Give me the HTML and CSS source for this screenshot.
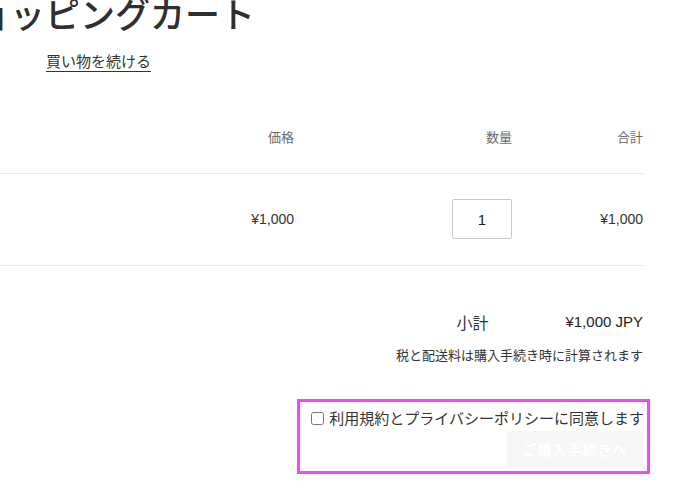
FILE: index.html
```html
<!DOCTYPE html>
<html lang="ja">
<head>
<meta charset="utf-8">
<title>ショッピングカート</title>
<link rel="stylesheet" href="styles.css">
</head>
<body>
<div class="page">
  <header class="cart-header">
    <h1 class="title">ショッピングカート</h1>
    <a class="continue" href="#">買い物を続ける</a>
  </header>

  <div class="cart-table">
    <div class="cart-row cart-head">
      <div class="cell"></div>
      <div class="cell right">価格</div>
      <div class="cell right">数量</div>
      <div class="cell right">合計</div>
    </div>
    <div class="cart-row cart-item">
      <div class="cell"></div>
      <div class="cell right">¥1,000</div>
      <div class="cell right"><input class="qty" type="text" value="1"></div>
      <div class="cell right">¥1,000</div>
    </div>
  </div>

  <section class="summary">
    <div class="subtotal">
      <span class="subtotal-label">小計</span>
      <span class="subtotal-value">¥1,000 JPY</span>
    </div>
    <p class="tax-note">税と配送料は購入手続き時に計算されます</p>
    <div class="agree-box">
      <label class="agree"><input type="checkbox" class="agree-check">利用規約とプライバシーポリシーに同意します</label>
      <button class="checkout" type="button" disabled>ご購入手続きへ</button>
    </div>
  </section>
</div>
</body>
</html>
```
FILE: styles.css
```css
html, body {
  margin: 0;
  padding: 0;
  background: #fff;
  overflow: hidden;
}
body {
  font-family: "Liberation Sans", "Noto Sans CJK JP", sans-serif;
  color: #333;
}
.page {
  width: 643px;
  padding-right: 50px;
}
.cart-header {
  display: flex;
  flex-direction: column;
  align-items: flex-start;
}
.title {
  margin: -9px 0 0 -60px;
  font-family: "Noto Sans CJK JP", sans-serif;
  font-size: 35px;
  font-weight: 500;
  line-height: 44px;
  color: #2f2f2f;
  white-space: nowrap;
}
.continue {
  margin: 16px 0 0 46px;
  font-family: "Noto Sans CJK JP", sans-serif;
  font-size: 15px;
  line-height: 20px;
  color: #333;
  text-decoration: none;
  border-bottom: 1px solid #333;
  padding-bottom: 0;
}
.cart-table {
  margin-top: 56px;
}
.cart-row {
  display: grid;
  grid-template-columns: 1fr 100px 218px 131px;
  align-items: center;
  border-bottom: 1px solid #e8e8e8;
}
.cell.right {
  text-align: right;
}
.cart-head {
  font-family: "Noto Sans CJK JP", sans-serif;
  font-size: 13px;
  color: #6b6b6b;
  line-height: 18px;
  padding: 0 0 27px;
}
.cart-item {
  font-size: 14px;
  padding: 25px 0 26px;
}
.qty {
  box-sizing: border-box;
  width: 60px;
  height: 40px;
  border: 1px solid #c8c8c8;
  border-radius: 2px;
  font-family: "Liberation Sans", sans-serif;
  font-size: 15px;
  color: #222;
  text-align: center;
  padding: 0;
  margin: 0;
  vertical-align: middle;
}
.summary {
  display: flex;
  flex-direction: column;
  align-items: flex-end;
  padding-top: 44px;
}
.subtotal {
  display: flex;
  align-items: center;
  gap: 77px;
  line-height: 24px;
}
.subtotal-label {
  font-family: "Noto Sans CJK JP", sans-serif;
  font-size: 16px;
  color: #333;
}
.subtotal-value {
  font-size: 15px;
  color: #222;
}
.tax-note {
  margin: 12px 0 0;
  font-family: "Noto Sans CJK JP", sans-serif;
  font-size: 13px;
  line-height: 17px;
  color: #333;
}
.agree-box {
  margin: 36px -7px 0 0;
  border: 3px solid #f747f7;
  padding: 5px 3px 4px 11px;
  display: flex;
  flex-direction: column;
  align-items: flex-end;
}
.agree {
  display: flex;
  align-items: center;
  font-family: "Noto Sans CJK JP", sans-serif;
  font-size: 15px;
  line-height: 22px;
  color: #333;
}
.agree-check {
  width: 13px;
  height: 13px;
  margin: 0 5px 0 0;
}
.checkout {
  margin-top: 2px;
  margin-right: 1px;
  width: 136px;
  height: 36px;
  border: none;
  border-radius: 2px;
  background: #f6f6f6;
  color: #fff;
  font-family: "Noto Sans CJK JP", sans-serif;
  font-size: 14px;
  font-weight: 700;
  letter-spacing: 1px;
  padding: 0;
}
```
